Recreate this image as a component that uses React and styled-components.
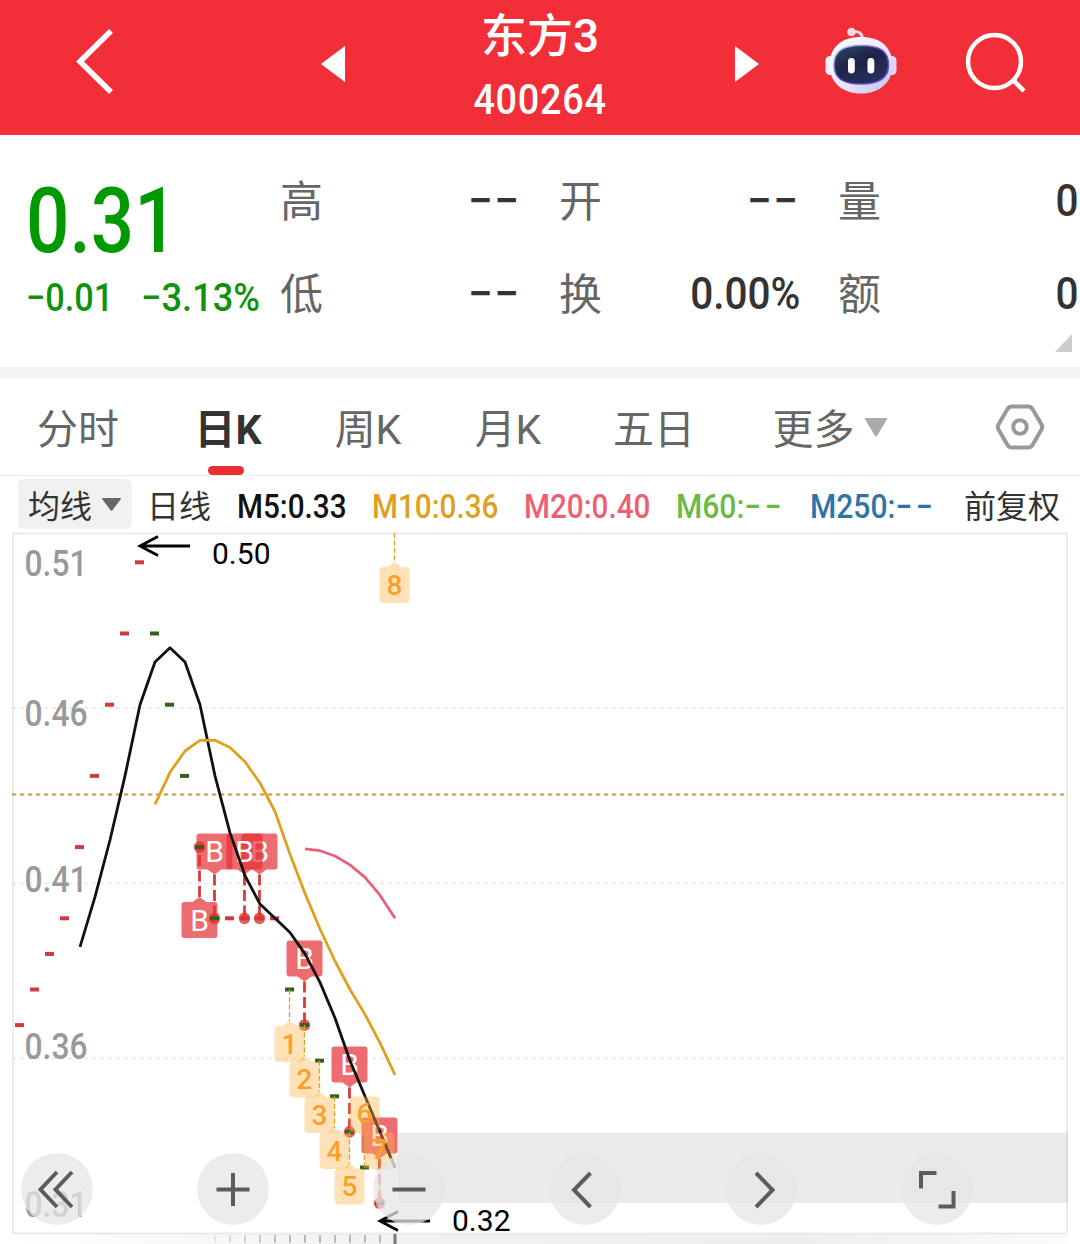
import React from "react";
import styled, { createGlobalStyle } from "styled-components";

const GlobalStyle = createGlobalStyle`
  * {
    box-sizing: border-box;
  }

  body {
    margin: 0;
    background: #fff;
    font-family: Roboto, "Noto Sans CJK SC", sans-serif;
  }
`;

const Page = styled.div`
  display: flex;
  flex-direction: column;
  width: 1080px;
  height: 1244px;
  overflow: hidden;
  background: #fff;
`;

// Text squeezed horizontally, to look like a DIN typeface
const Num = styled.span`
  display: block;
  white-space: nowrap;
  font-size: ${(p) => p.$size}px;
  font-weight: ${(p) => p.$weight || 500};
  line-height: 1;
  letter-spacing: ${(p) => p.$spacing || 0}px;
  transform: scaleX(${(p) => p.$squeeze || 1});
  transform-origin: ${(p) => p.$origin || "left"} center;
`;

/* ---------- header ---------- */

const Header = styled.header`
  display: grid;
  grid-template-columns: 321px 24px 390px 24px 66px 72px 68px 62px;
  align-items: center;
  height: 135px;
  flex: none;
  color: #fff;
  background: #f22f38;
`;

const BackIcon = styled.svg`
  margin: 0 0 14px 74px;
`;

const Stock = styled.div`
  display: flex;
  flex-direction: column;
  align-items: center;
  gap: 20px;
  height: 135px;
  padding-top: 13px;
`;

const StockName = styled.h1`
  margin: 0;
  font-size: 46px;
  font-weight: 500;
  line-height: 46px;
`;

const RobotIcon = styled.svg`
  grid-column: 6;
  margin-bottom: 15px;
`;

const SearchIcon = styled.svg`
  grid-column: 8;
  margin: 0 0 9px 1px;
  overflow: visible;
`;

const Arrow = styled.svg`
  margin-bottom: 8px;
`;

/* ---------- quote ---------- */

const Quote = styled.section`
  display: flex;
  position: relative;
  height: 232px;
  flex: none;
  padding-left: 26px;
`;

const Price = styled.div`
  width: 253px;
  padding-top: 41px;
  color: #009900;
`;

const Change = styled.div`
  display: grid;
  grid-template-columns: 115px 1fr;
  margin-top: 12px;
  color: #0f930f;
`;

const Facts = styled.div`
  display: grid;
  grid-template-columns: repeat(3, 242px);
  grid-auto-rows: 93px;
  column-gap: 37px;
  padding-top: 19px;
`;

const Fact = styled.div`
  display: flex;
  align-items: center;
  justify-content: space-between;
  color: #333;
`;

const FactLabel = styled.span`
  padding: 3px 0 0 1px;
  font-size: 43px;
  line-height: 1;
  color: #666;
`;

const Expand = styled.svg`
  position: absolute;
  right: 8px;
  bottom: 15px;
`;

/* ---------- tabs ---------- */

const Tabs = styled.nav`
  display: grid;
  grid-template-columns: 156px 144px 136px 144px 148px 203px 1fr;
  height: 109px;
  flex: none;
  border-top: 12px solid #f4f4f4;
  border-bottom: 1.5px solid #eee;
`;

const Tab = styled.div`
  display: flex;
  position: relative;
  align-items: center;
  justify-content: center;
  gap: 10px;
  font-size: 41px;
  line-height: 1;
  font-weight: ${(p) => (p.$active ? 700 : 400)};
  color: ${(p) => (p.$active ? "#333" : "#666")};

  &::after {
    content: "";
    display: ${(p) => (p.$active ? "block" : "none")};
    position: absolute;
    bottom: 0;
    left: 52px;
    width: 36px;
    height: 9px;
    border-radius: 5px;
    background: #e62e33;
  }
`;

const TabText = styled.span`
  padding-top: 7px;
`;

const Settings = styled.div`
  display: flex;
  align-items: center;
  justify-content: flex-end;
  padding-right: 35px;
`;

/* ---------- moving average legend ---------- */

const Legend = styled.div`
  display: flex;
  align-items: center;
  height: 56px;
  flex: none;
  padding-left: 18px;
  font-size: 32px;
  line-height: 1;
  color: #333;
`;

const LegendText = styled.span`
  padding-top: 6px;
  margin-right: ${(p) => p.$gap || 0}px;
`;

const Picker = styled.button`
  display: flex;
  align-items: center;
  gap: 10px;
  width: 114px;
  height: 50px;
  margin-right: 15px;
  padding: 0 0 0 10px;
  border: 0;
  border-radius: 6px;
  font: inherit;
  color: #333;
  background: #f1f1f1;
`;

const LegendItem = styled.div`
  width: ${(p) => p.$width}px;
  padding-top: 4px;
  color: ${(p) => p.$color};
`;

const Blank = styled.span`
  letter-spacing: 4px;
`;

/* ---------- chart ---------- */

const ChartArea = styled.main`
  position: relative;
  flex: 1;
`;

const ChartSvg = styled.svg`
  display: block;
`;

const Controls = styled.div`
  display: flex;
  position: absolute;
  left: 21px;
  top: 621px;
  gap: 104px;
`;

const Control = styled.button`
  display: flex;
  align-items: center;
  justify-content: center;
  width: 72px;
  height: 72px;
  padding: 0;
  border: 0;
  border-radius: 50%;
  background: rgba(229, 229, 229, 0.74);
`;

const facts = [
  ["高", "−−"],
  ["开", "−−"],
  ["量", "0"],
  ["低", "−−"],
  ["换", "0.00%"],
  ["额", "0"],
];

const averages = [
  { name: "M5:", value: "0.33", color: "#111", width: 135, squeeze: 0.9 },
  { name: "M10:", value: "0.36", color: "#e09f20", width: 152, squeeze: 0.9 },
  { name: "M20:", value: "0.40", color: "#ee5f73", width: 152, squeeze: 0.9 },
  { name: "M60:", color: "#6abb45", width: 134, squeeze: 0.91 },
  { name: "M250:", color: "#2f73a8", width: 154, squeeze: 0.91 },
];

const closes = [
  0.37, 0.38, 0.39, 0.4, 0.42, 0.44, 0.46, 0.48, 0.5, 0.48, 0.46, 0.44, 0.42,
  0.4, 0.4, 0.4, 0.4, 0.4, 0.38, 0.37, 0.36, 0.35, 0.34, 0.33, 0.32, 0.31,
];
const falling = [9, 10, 11, 12, 13, 18, 19, 20, 21, 22, 23, 24];

const xAt = (i) => 19.5 + i * 15;
const yAt = (price) => 633.5 + (0.48 - price) * 3560;

const averageLine = (days) =>
  closes
    .map((_, i) => {
      if (i < days - 1) return null;
      const part = closes.slice(i - days + 1, i + 1);
      const mean = part.reduce((a, b) => a + b, 0) / days;
      return `${xAt(i) + 0.5},${yAt(mean).toFixed(1)}`;
    })
    .filter(Boolean)
    .join(" ");

const buys = [
  { day: 12, top: 902, up: true },
  { day: 13, top: 833.5 },
  { day: 16, top: 833.5 },
  { day: 15, top: 833.5 },
  { day: 19, top: 940.5 },
  { day: 22, top: 1046.5 },
  { day: 24, top: 1117.5 },
];

const counts = [
  { n: 1, day: 18, top: 1026 },
  { n: 2, day: 19, top: 1061.5 },
  { n: 3, day: 20, top: 1097 },
  { n: 4, day: 21, top: 1133 },
  { n: 5, day: 22, top: 1168.5 },
  { n: 6, day: 23, top: 1096.5, down: true },
  { n: 7, day: 24, top: 1132.5, down: true },
  { n: 8, day: 25, top: 567, from: 533 },
];

const scale = [
  ["0.51", 576],
  ["0.46", 726],
  ["0.41", 892],
  ["0.36", 1059],
  ["0.31", 1217],
];

function BuyMark({ day, top, up }) {
  const x = xAt(day);
  const y = yAt(closes[day]);
  return (
    <g>
      <line
        x1={x}
        x2={x}
        y1={up ? top - 5 : top + 41}
        y2={y}
        stroke="#d93a3c"
        strokeWidth="2.8"
        strokeDasharray="11 4.5"
      />
      <circle cx={x} cy={y} r="5.8" fill="#e62e2e" opacity="0.8" />
      <path
        fill="#e62e33"
        fillOpacity="0.7"
        d={
          up
            ? `M${x - 15} ${top}h8l7-5 7 5h8q3 0 3 3v30q0 3-3 3h-30q-3 0-3-3v-30q0-3 3-3z`
            : `M${x - 15} ${top}h30q3 0 3 3v30q0 3-3 3h-8l-7 5-7-5h-8q-3 0-3-3v-30q0-3 3-3z`
        }
      />
      <text x={x} y={top + 28.5} fontSize="30" fill="#fff" textAnchor="middle">
        B
      </text>
    </g>
  );
}

function CountMark({ n, day, top, down, from }) {
  const x = xAt(day);
  return (
    <g>
      <line
        x1={x}
        x2={x}
        y1={from || yAt(closes[day])}
        y2={down ? top + 40 : top - 5}
        stroke="#d6a02a"
        strokeWidth="1.3"
        strokeDasharray="5 2.5"
      />
      <path
        fill="#ffb44d"
        fillOpacity="0.4"
        d={
          down
            ? `M${x - 11} ${top}h22q4 0 4 4v28q0 4-4 4h-4l-7 4-7-4h-4q-4 0-4-4v-28q0-4 4-4z`
            : `M${x - 11} ${top}h4l7-5 7 5h4q4 0 4 4v28q0 4-4 4h-22q-4 0-4-4v-28q0-4 4-4z`
        }
      />
      <text
        x={x}
        y={top + (down ? 26 : 27.5)}
        fontSize="28"
        fontWeight="500"
        fill="#f7a12b"
        textAnchor="middle"
      >
        {n}
      </text>
    </g>
  );
}

function Chart() {
  return (
    <ChartSvg width="1080" height="712" viewBox="0 532 1080 712" fill="none">
      <defs>
        <linearGradient id="strip">
          <stop offset="0" stopColor="#fff" />
          <stop offset="0.35" stopColor="#f1f1f1" />
          <stop offset="0.75" stopColor="#eee" />
          <stop offset="1" stopColor="#fbfbfb" />
        </linearGradient>
      </defs>
      <rect x="13" y="1234" width="1055" height="10" fill="url(#strip)" />
      <rect x="13" y="533.5" width="1054" height="700" stroke="#e8e8e8" strokeWidth="1.7" />
      {[708, 883.5, 1058.5].map((y) => (
        <line key={y} x1="12" x2="1066" y1={y} y2={y} stroke="#e7e7e7" strokeWidth="1.6" strokeDasharray="4 4" />
      ))}
      <line x1="12" x2="1066" y1="794.5" y2="794.5" stroke="#cc9350" strokeWidth="2.2" strokeDasharray="4.3 3.7" />

      <g fontSize="36" fontWeight="500" fill="#999">
        {scale.map(([label, y]) => (
          <text key={label} x="24.500" y={y} textLength="63" lengthAdjust="spacingAndGlyphs">
            {label}
          </text>
        ))}
      </g>

      {buys.map((b) => (
        <BuyMark key={b.day} {...b} />
      ))}

      {closes.slice(0, 25).map((price, i) => (
        <rect
          key={i}
          x={xAt(i) - 4.5}
          y={yAt(price) - 2}
          width="9"
          height="4"
          fill={falling.includes(i) ? "#33611c" : "#cf3a3c"}
        />
      ))}

      <g strokeWidth="2.8" strokeLinejoin="round">
        <polyline points={averageLine(5)} stroke="#111" />
        <polyline points={averageLine(10)} stroke="#e0a01f" />
        <polyline points={averageLine(20)} stroke="#e8607a" />
      </g>

      {counts.map((c) => (
        <CountMark key={c.n} {...c} />
      ))}

      <path d="M398 1132.500H1068V1203H398z" fill="#000" fillOpacity="0.08" />

      <g stroke="#000" strokeWidth="2.8">
        <path d="M190 546H140M158 536.500 140 546l18 9.500" />
        <path d="M430 1221H380M398 1211.500 380 1221l18 9.500" />
      </g>
      <g fontSize="30" fill="#000">
        <text x="212" y="563.500">0.50</text>
        <text x="452" y="1230.500">0.32</text>
      </g>

      {Array.from({ length: 12 }, (_, i) => (
        <line
          key={i}
          x1={215 + i * 15}
          x2={215 + i * 15}
          y1="1235"
          y2="1243"
          stroke="#aaa"
          strokeWidth="1.6"
          opacity={Math.min(1, 0.3 + i * 0.15)}
        />
      ))}
      <line x1="395" x2="395" y1="1234" y2="1244" stroke="#777" strokeWidth="3" />
    </ChartSvg>
  );
}

const controlIcons = [
  "M36 19 19.500 36.500 36 54M51 19 34.500 36.500 51 54",
  "M36 20v33M19.500 36.500h33",
  "M19.500 36.500h33",
  "M41.500 20 25 37 41.500 54",
  "M31 20 47.500 37 31 54",
  "M35.500 20H20V35.500M37.500 53.500H52.500V38",
];

const Triangle = ({ width, height, color }) => (
  <svg width={width} height={height} viewBox="0 0 20 16" preserveAspectRatio="none">
    <path d="M1 0h18q1.500 0 .7 1.400L11 15q-1 1.500-2 0L.3 1.400Q-.5 0 1 0z" fill={color} />
  </svg>
);

function Robot() {
  return (
    <RobotIcon width="72" height="70" viewBox="0 0 72 70">
      <defs>
        <linearGradient id="shell" x1="0" y1="0" x2="1" y2="1">
          <stop offset="0" stopColor="#fff" />
          <stop offset="0.5" stopColor="#efeafb" />
          <stop offset="1" stopColor="#bfc0ee" />
        </linearGradient>
        <linearGradient id="rim" x1="0" y1="0" x2="1" y2="1">
          <stop offset="0" stopColor="#9fe0ee" />
          <stop offset="0.5" stopColor="#6a3fd0" />
          <stop offset="1" stopColor="#5b4fc8" />
        </linearGradient>
        <linearGradient id="face" x1="0" y1="0" x2="0.6" y2="1">
          <stop offset="0" stopColor="#39436c" />
          <stop offset="0.5" stopColor="#1c2547" />
          <stop offset="1" stopColor="#27305a" />
        </linearGradient>
      </defs>
      <path d="M27 6.500q10-1 10.500 7" fill="none" stroke="#f3dcea" strokeWidth="2.8" />
      <circle cx="26.500" cy="7" r="4.300" fill="#f5d9e4" />
      <rect x="0.500" y="31" width="10" height="19" rx="4.500" fill="#f1effc" />
      <rect x="61.500" y="31" width="10" height="19" rx="4.500" fill="#dcd6f5" />
      <path
        d="M36 12C55 12 67.500 22 67.500 40S54 68.500 36 68.500 4.500 58 4.500 40 17 12 36 12z"
        fill="url(#shell)"
      />
      <path
        d="M36 20.500c19 0 27.500 6 27.500 19.500S54 59 36 59 9 53.500 9 40s8-19.500 27-19.500z"
        fill="url(#face)"
        stroke="url(#rim)"
        strokeWidth="1.500"
      />
      <rect x="23" y="33" width="6.800" height="15.500" rx="3.400" fill="#fff" />
      <rect x="42.500" y="33" width="6.800" height="15.500" rx="3.400" fill="#fff" />
    </RobotIcon>
  );
}

export default function App() {
  return (
    <Page>
      <GlobalStyle />
      <Header>
        <BackIcon width="44" height="70" viewBox="0 0 44 70" fill="none" stroke="#fff" strokeWidth="5.500">
          <path d="M37 5 6 35.500 37 66" />
        </BackIcon>
        <Arrow width="24" height="36" viewBox="0 0 24 36">
          <path d="M0 18 24 0v36z" fill="#fff" />
        </Arrow>
        <Stock>
          <StockName>东方3</StockName>
          <Num $size="42" $squeeze={0.9} $spacing={0.8} $origin="center">
            400264
          </Num>
        </Stock>
        <Arrow width="24" height="36" viewBox="0 0 24 36">
          <path d="M24 18 0 0v36z" fill="#fff" />
        </Arrow>
        <Robot />
        <SearchIcon width="62" height="62" viewBox="0 0 62 62" fill="none" stroke="#fff" strokeWidth="4.500">
          <circle cx="28.500" cy="29.500" r="26.500" />
          <path d="M47 48 58 59" />
        </SearchIcon>
      </Header>

      <Quote>
        <Price>
          <Num $size="91" $squeeze={0.84}>
            0.31
          </Num>
          <Change>
            <Num $size="39" $squeeze={0.88}>
              −0.01
            </Num>
            <Num $size="39" $squeeze={0.93}>
              −3.13%
            </Num>
          </Change>
        </Price>
        <Facts>
          {facts.map(([label, value]) => (
            <Fact key={label}>
              <FactLabel>{label}</FactLabel>
              {value === "−−" ? (
                <Num $size="45" $origin="right" $squeeze={0.98} $spacing={1.5}>
                  {value}
                </Num>
              ) : (
                <Num $size="45" $origin="right" $squeeze={0.9}>
                  {value}
                </Num>
              )}
            </Fact>
          ))}
        </Facts>
        <Expand width="17" height="18">
          <path d="M17 0v18H0z" fill="#ccc" />
        </Expand>
      </Quote>

      <Tabs>
        <Tab>
          <TabText>分时</TabText>
        </Tab>
        <Tab $active>
          <TabText>日K</TabText>
        </Tab>
        <Tab>
          <TabText>周K</TabText>
        </Tab>
        <Tab>
          <TabText>月K</TabText>
        </Tab>
        <Tab>
          <TabText>五日</TabText>
        </Tab>
        <Tab>
          <TabText>更多</TabText>
          <Triangle width={22} height={19} color="#aaa" />
        </Tab>
        <Settings>
          <svg width="50" height="50" viewBox="0 0 50 50" fill="none" stroke="#999">
            <path
              d="M17 4.500h16q3 0 4.500 2.500l9 15.500q1.500 2.500 0 5L37.500 43q-1.500 2.500-4.500 2.500H17q-3 0-4.500-2.500l-9-15.500q-1.500-2.500 0-5L12.500 7q1.500-2.500 4.500-2.500z"
              strokeWidth="4"
            />
            <circle cx="25" cy="25" r="6.800" strokeWidth="4" />
          </svg>
        </Settings>
      </Tabs>

      <Legend>
        <Picker>
          <LegendText>均线</LegendText>
          <Triangle width={19} height={13} color="#666" />
        </Picker>
        <LegendText $gap={26}>日线</LegendText>
        {averages.map((a) => (
          <LegendItem key={a.name} $width={a.width} $color={a.color}>
            <Num $size="33" $squeeze={a.squeeze}>
              {a.name}
              {a.value || <Blank>−−</Blank>}
            </Num>
          </LegendItem>
        ))}
        <LegendText>前复权</LegendText>
      </Legend>

      <ChartArea>
        <Chart />
        <Controls>
          {controlIcons.map((d) => (
            <Control key={d}>
              <svg width="72" height="72" viewBox="0 0 72 72" fill="none" stroke="#5c5c5c" strokeWidth="4">
                <path d={d} />
              </svg>
            </Control>
          ))}
        </Controls>
      </ChartArea>
    </Page>
  );
}
